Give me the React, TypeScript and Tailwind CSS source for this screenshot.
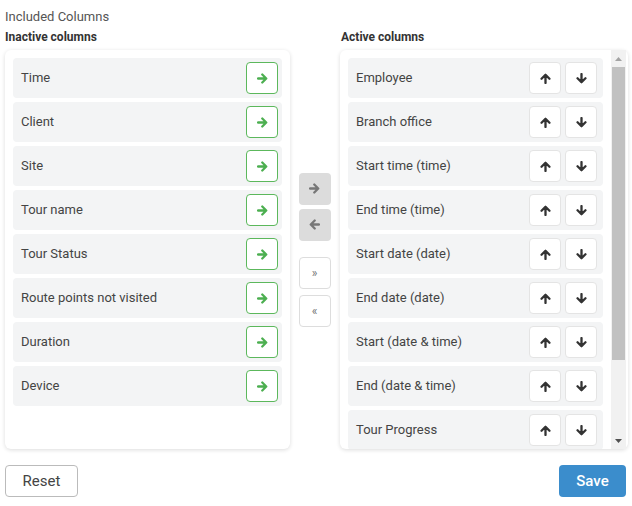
import React from "react";

const inactive = ["Time", "Client", "Site", "Tour name", "Tour Status", "Route points not visited", "Duration", "Device"];
const active = [
  "Employee",
  "Branch office",
  "Start time (time)",
  "End time (time)",
  "Start date (date)",
  "End date (date)",
  "Start (date & time)",
  "End (date & time)",
  "Tour Progress",
];

function Arrow({ dir, className }: { dir: "right" | "left" | "up" | "down"; className?: string }) {
  const rot = { right: 0, down: 90, left: 180, up: 270 }[dir];
  return (
    <svg width="11" height="11" viewBox="0 0 10 10" className={className} style={{ transform: `rotate(${rot}deg)` }}>
      <path d="M1 5h7.2M4.8 1.4L8.4 5 4.8 8.6" fill="none" stroke="currentColor" strokeWidth="2.1" strokeLinecap="round" strokeLinejoin="round" />
    </svg>
  );
}

export default function App() {
  return (
    <div className="w-[632px] h-[506px] bg-white text-[#333] overflow-hidden" style={{ fontFamily: "Roboto, 'Liberation Sans', sans-serif" }}>
      <div className="pl-[5px] pt-[9px] text-[13px] leading-[16px] text-[#555]">Included Columns</div>
      <div className="flex pl-[5px] mt-[5px]">
        <div className="w-[285px]">
          <div className="text-[12px] leading-[14px] font-bold text-[#333]">Inactive columns</div>
          <div className="mt-[6px] h-[399px] rounded-md bg-white shadow-[0_1px_4px_rgba(0,0,0,0.14)] p-2 flex flex-col gap-1">
            {inactive.map((t) => (
              <div key={t} className="h-10 shrink-0 rounded bg-[#f3f4f5] flex items-center justify-between pl-2 pr-1 text-[13px] text-[#444]">
                <span>{t}</span>
                <button className="w-8 h-8 rounded border border-[#5cb85c] bg-white flex items-center justify-center text-[#4caf50]">
                  <Arrow dir="right" />
                </button>
              </div>
            ))}
          </div>
        </div>
        <div className="w-[50px] pt-5 flex flex-col items-center justify-center">
          <div className="flex flex-col gap-1 ml-[-1px]">
            <button className="w-8 h-8 rounded bg-[#dcdcdc] flex items-center justify-center text-[#777]">
              <Arrow dir="right" />
            </button>
            <button className="w-8 h-8 rounded bg-[#dcdcdc] flex items-center justify-center text-[#777]">
              <Arrow dir="left" />
            </button>
            <button className="mt-3 w-8 h-8 rounded border border-[#ddd] bg-white flex items-center justify-center text-[#777] text-[12px]">
              »
            </button>
            <button className="mt-[2px] w-8 h-8 rounded border border-[#ddd] bg-white flex items-center justify-center text-[#777] text-[12px]">
              «
            </button>
          </div>
        </div>
        <div className="w-[288px]">
          <div className="text-[12px] leading-[14px] font-bold text-[#333] pl-px">Active columns</div>
          <div className="mt-[6px] h-[399px] rounded-md bg-white shadow-[0_1px_4px_rgba(0,0,0,0.14)] flex pl-2 pr-[2px]">
            <div className="w-[255px] pt-2 overflow-hidden flex flex-col gap-1">
              {active.map((t) => (
                <div key={t} className="h-10 shrink-0 rounded bg-[#f3f4f5] flex items-center justify-between pl-2 pr-[6px] text-[13px] text-[#444]">
                  <span>{t}</span>
                  <div className="flex gap-1">
                    <button className="w-8 h-8 rounded border border-[#e4e4e4] bg-white flex items-center justify-center text-[#333]">
                      <Arrow dir="up" />
                    </button>
                    <button className="w-8 h-8 rounded border border-[#e4e4e4] bg-white flex items-center justify-center text-[#333]">
                      <Arrow dir="down" />
                    </button>
                  </div>
                </div>
              ))}
            </div>
            <div className="ml-2 w-[15px] bg-[#f1f1f1] flex flex-col items-center">
              <div className="h-[17px] w-full flex items-center justify-center">
                <svg width="7" height="4" viewBox="0 0 7 4"><path d="M0 4L3.5 0 7 4z" fill="#a3a3a3" /></svg>
              </div>
              <div className="w-[13px] h-[293px] bg-[#c1c1c1]" />
              <div className="flex-1" />
              <div className="h-[17px] w-full flex items-center justify-center">
                <svg width="7" height="4" viewBox="0 0 7 4"><path d="M0 0L3.5 4 7 0z" fill="#505050" /></svg>
              </div>
            </div>
          </div>
        </div>
      </div>
      <div className="flex justify-between pl-[5px] pr-[6px] mt-4">
        <button className="w-[73px] h-8 rounded border border-[#bbb] bg-white text-[15px] text-[#444]">Reset</button>
        <button className="w-[67px] h-8 rounded bg-[#3b8dcc] text-[15px] text-white font-medium">Save</button>
      </div>
    </div>
  );
}
